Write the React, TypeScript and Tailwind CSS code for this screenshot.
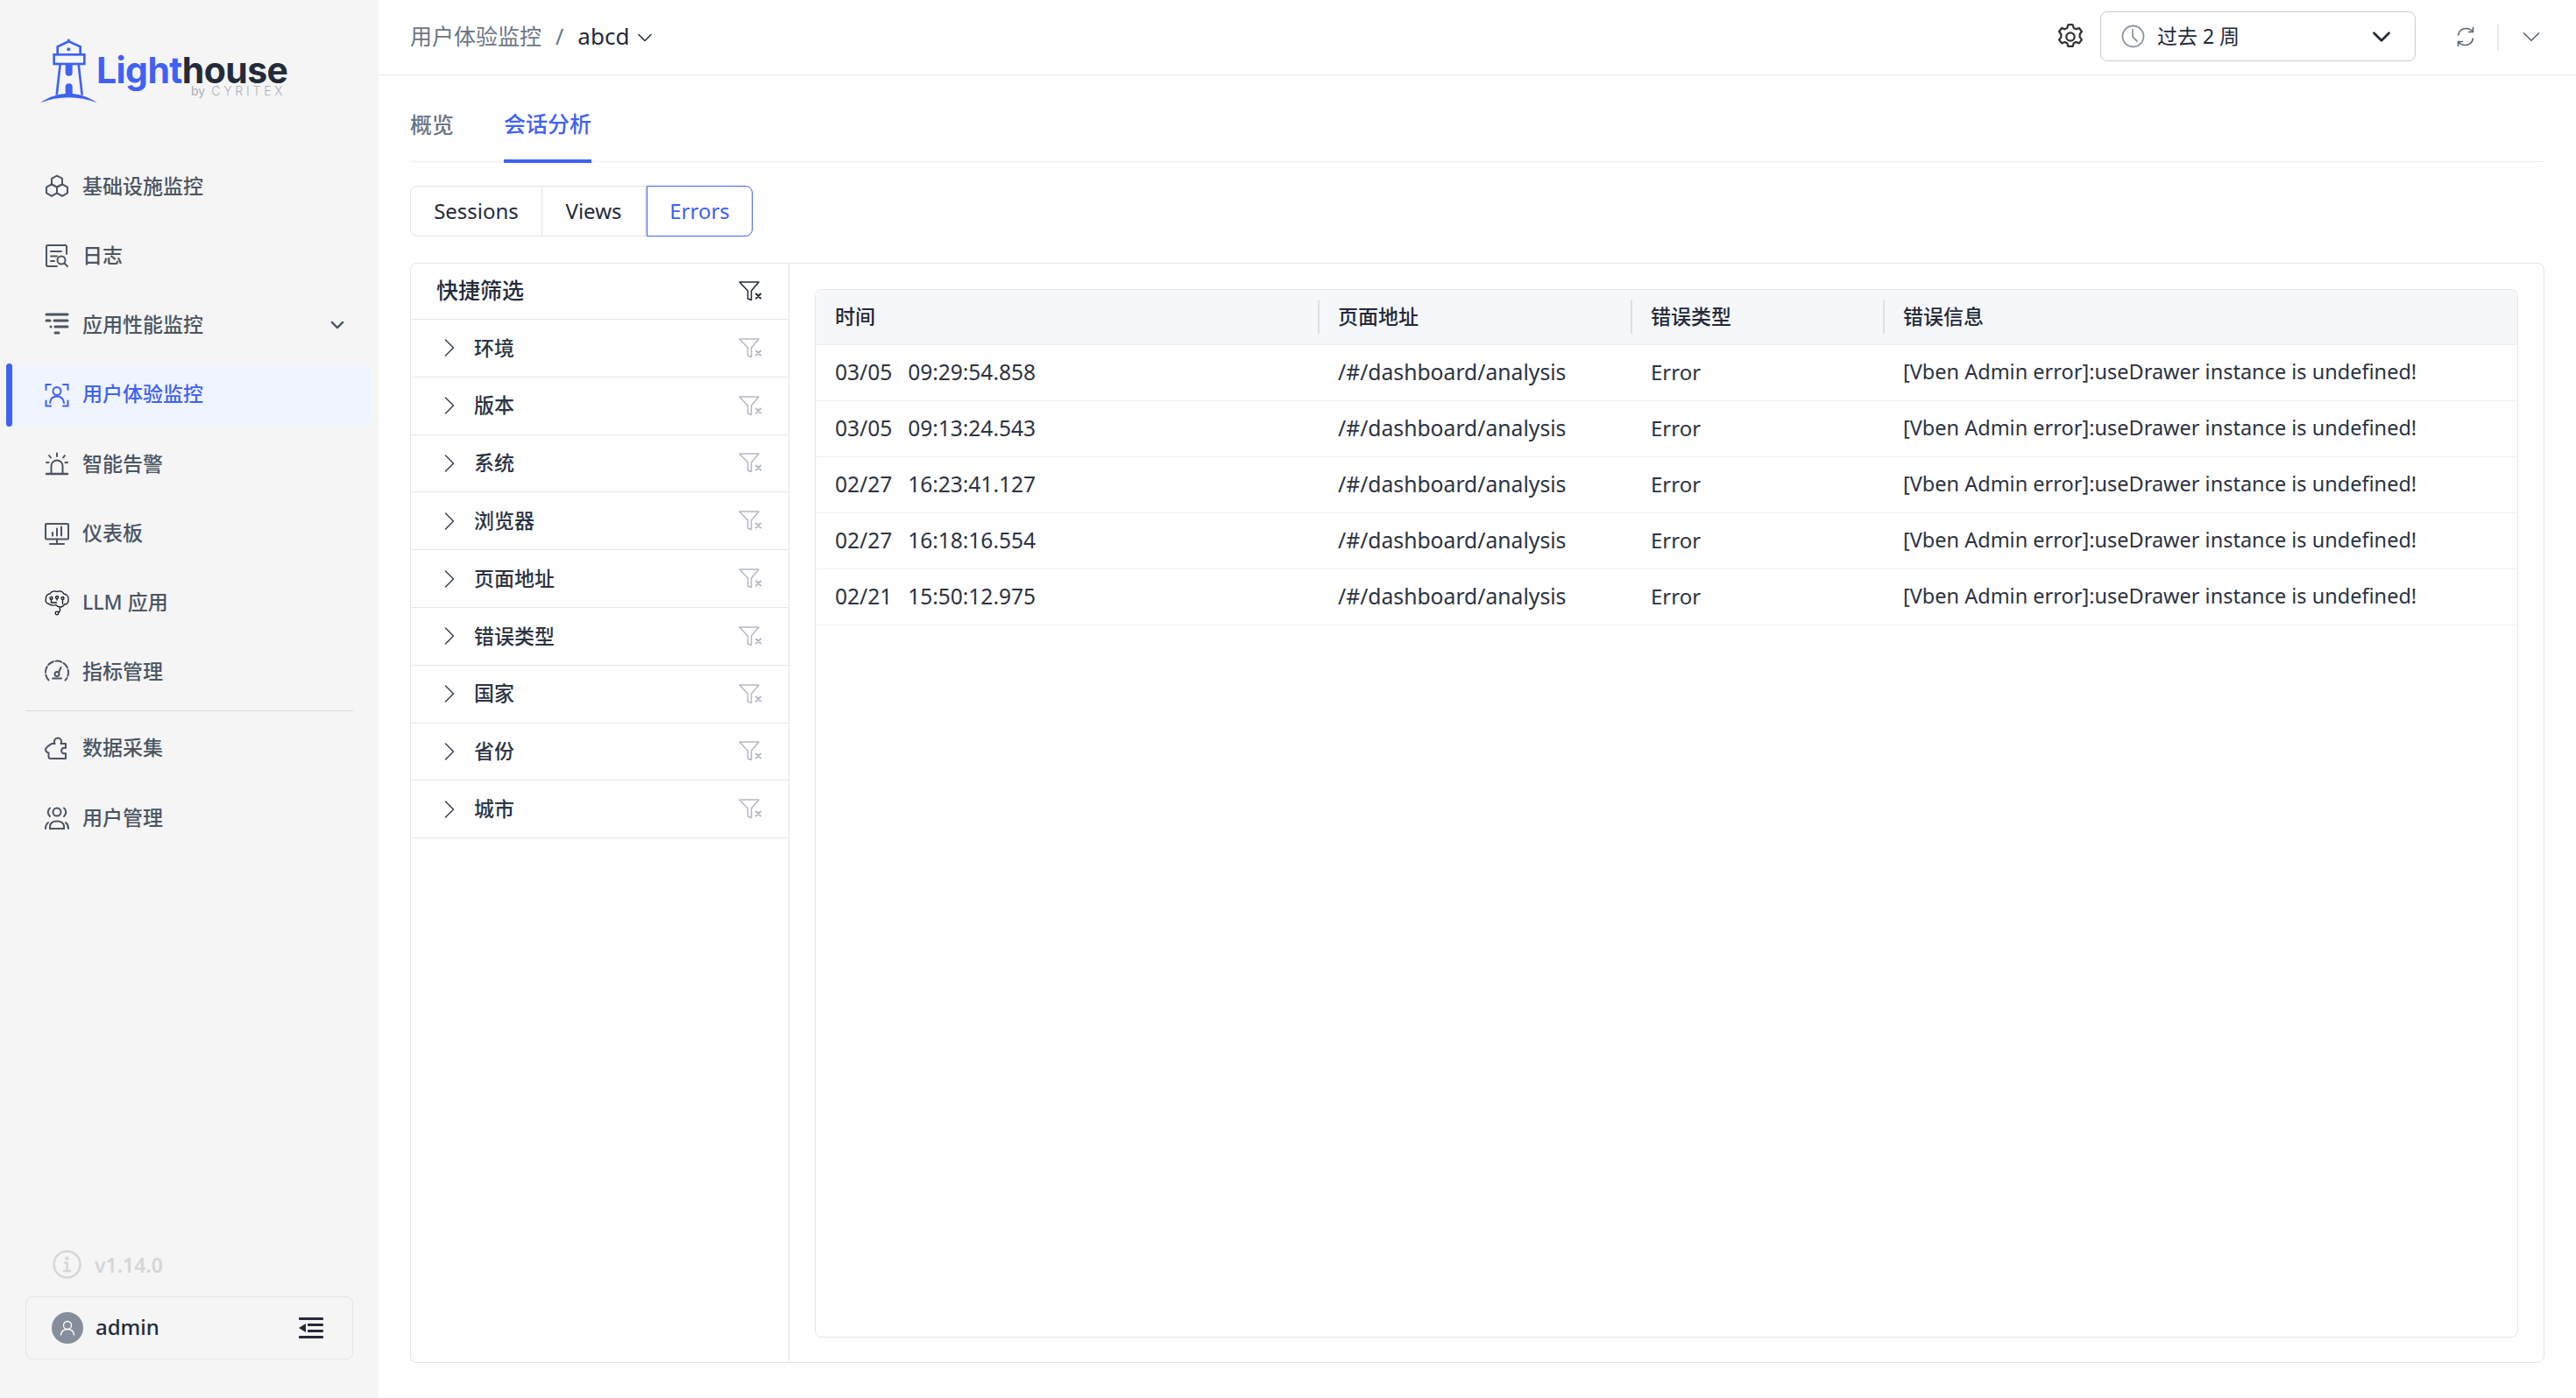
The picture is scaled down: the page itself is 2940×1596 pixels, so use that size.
import React from "react";

const FONT = "font-['Noto_Sans','Noto_Sans_CJK_SC',sans-serif]";
const BLUE = "#3f62f5";

type IconProps = { color?: string };

const HexIcon = ({ color = "#4b5563" }: IconProps) => (
  <svg width="28" height="28" viewBox="0 0 28 28" fill="none" stroke={color} strokeWidth="2" strokeLinejoin="round">
    <path d="M14 1.500l6 3.400v6.400l-6 3.400-6-3.400V4.900z" />
    <path d="M8 11.300l6 3.400v6.600l-6 3.500-6-3.500v-6.600z" />
    <path d="M20 11.300l6 3.400v6.600l-6 3.500-6-3.500v-6.600z" />
  </svg>
);

const LogIcon = ({ color = "#4b5563" }: IconProps) => (
  <svg width="28" height="28" viewBox="0 0 28 28" fill="none" stroke={color} strokeWidth="2" strokeLinecap="round">
    <path d="M25 12V3.500a1.500 1.500 0 0 0-1.500-1.500H3.500A1.500 1.500 0 0 0 2 3.500v21A1.500 1.500 0 0 0 3.500 26H14" />
    <path d="M7 9h12M7 14.500h7M7 20h4" />
    <circle cx="19" cy="19" r="4.500" />
    <path d="M22.500 22.500L26 26" />
  </svg>
);

const PerfIcon = ({ color = "#4b5563" }: IconProps) => (
  <svg width="28" height="28" viewBox="0 0 28 28" fill="none" stroke={color} strokeWidth="3" strokeLinecap="round">
    <path d="M2 2h24M2 9h4M11 9h15M7 16h0M12 16h14M14 16h0M12 23h4" />
  </svg>
);

const ScanUserIcon = ({ color = BLUE }: IconProps) => (
  <svg width="28" height="28" viewBox="0 0 28 28" fill="none" stroke={color} strokeWidth="2" strokeLinecap="round">
    <path d="M7 2H1.500v6M21 2h5.500v6M1.500 20.500V26.500H7M26.500 20.500V26.500H21" />
    <circle cx="14" cy="9.500" r="4.500" />
    <path d="M6 23c.6-5 3.500-7.500 8-7.500s7.400 2.500 8 7.500" />
  </svg>
);

const AlarmIcon = ({ color = "#4b5563" }: IconProps) => (
  <svg width="28" height="28" viewBox="0 0 28 28" fill="none" stroke={color} strokeWidth="2" strokeLinecap="round">
    <path d="M2 25h24" strokeWidth="2.500" />
    <path d="M7.500 24v-8a6.500 6.500 0 0 1 13 0v8" />
    <path d="M14 1.500v3.500M5 4l2 2.500M23 4l-2 2.500M2 12h2.500M23.500 12H26" />
  </svg>
);

const BoardIcon = ({ color = "#4b5563" }: IconProps) => (
  <svg width="28" height="28" viewBox="0 0 28 28" fill="none" stroke={color} strokeWidth="2" strokeLinecap="round">
    <rect x="1" y="3" width="26" height="17.500" rx="1" />
    <path d="M14 20.500V26M6 26h16M9 13v3.500M14 8.500v8M19 6.500v10" />
  </svg>
);

const BrainIcon = () => (
  <svg width="28" height="30" viewBox="0 0 28 30" fill="none" stroke="#111827" strokeWidth="1.300" strokeLinecap="round">
    <path d="M5 16.500C1.500 16 .5 13 1.500 10.500 1 7.500 3 5 6 5 7.500 2 11 1 14 2.500c3-1.500 6.500-.5 8 2.500 3 .5 5.500 3 5 6.500.5 3-1.500 5.500-4.500 5.500-1 2-2.500 3-4.500 3-2.500 0-4-1-5.500-2.500-1.500 1-5.500 1-7.500-1z" />
    <circle cx="7.500" cy="10" r="1.500" />
    <circle cx="14" cy="9" r="1.500" />
    <circle cx="20.500" cy="10" r="1.500" />
    <path d="M7.500 11.500V15h6M14 10.500v1.500M20.500 11.500v5M17 21c1 2 .5 4-1 5" />
    <circle cx="14" cy="27" r="1.800" />
  </svg>
);

const GaugeIcon = ({ color = "#4b5563" }: IconProps) => (
  <svg width="28" height="28" viewBox="0 0 28 28" fill="none" stroke={color} strokeWidth="2" strokeLinecap="round">
    <path d="M4.500 23.500A13 13 0 1 1 23.500 23.500" strokeDasharray="7 2.500" />
    <path d="M18.500 9l-2.500 5.500" />
    <circle cx="14" cy="16.500" r="2.500" />
    <path d="M9 21.500h10" />
  </svg>
);

const PuzzleIcon = ({ color = "#4b5563" }: IconProps) => (
  <svg width="28" height="28" viewBox="0 0 28 28" fill="none" stroke={color} strokeWidth="2" strokeLinejoin="round">
    <path d="M8 8h3.500c-1.500-3 0-6.500 3.500-6.500s5 3.500 3.500 6.500H24v5c-2.500-1-5 .5-5 3s2.500 4 5 3v6H6.500c-1.500 0-2-1-2-2v-4.500C2.500 18 1 16.500 1 14.500 1 12.500 5 10 8 8z" />
  </svg>
);

const UsersIcon = ({ color = "#4b5563" }: IconProps) => (
  <svg width="28" height="28" viewBox="0 0 28 28" fill="none" stroke={color} strokeWidth="2" strokeLinecap="round">
    <circle cx="14" cy="7" r="4.500" />
    <path d="M6 26v-2c0-4 3-6.500 8-6.500s8 2.500 8 6.500v2zM6 2.500C3 5 3 9.500 6 12M22 2.500c3 2.500 3 7 0 9.500M1 26c0-3 1-5.500 3-7M27 26c0-3-1-5.500-3-7" />
  </svg>
);

const FilterClearIcon = ({ color = "#b4b9c4" }: IconProps) => (
  <svg width="26" height="23" viewBox="0 0 26 23" fill="none" stroke={color} strokeWidth="1.500" strokeLinejoin="round" strokeLinecap="round">
    <path d="M1 1h22l-8.500 10v10.500l-4-1.500v-9z" />
    <path d="M20 14.500l5 5M25 14.500l-5 5" strokeWidth="2" />
  </svg>
);

const ChevronDown = ({ size = 18, color = "#4b5563", width = 2 }: { size?: number; color?: string; width?: number }) => (
  <svg width={size} height={size} viewBox="0 0 18 18" fill="none" stroke={color} strokeWidth={width} strokeLinecap="round" strokeLinejoin="round">
    <path d="M2 5.500l7 7 7-7" />
  </svg>
);

const ChevronRight = () => (
  <svg width="12" height="20" viewBox="0 0 12 20" fill="none" stroke="#374151" strokeWidth="1.500" strokeLinecap="round" strokeLinejoin="round">
    <path d="M1.500 1l9 9-9 9" />
  </svg>
);

const Logo = () => (
  <div className="flex h-[177px] items-start pl-[46px] pt-[44px]">
    <svg width="65" height="74" viewBox="138 130 195 222" className="shrink-0">
      <g fill="none" stroke={BLUE} strokeWidth="8">
        <path d="M197 184v-26l38-18 40 18v26" />
        <rect x="185" y="185" width="104" height="32" />
        <path d="M206 218l-12 106M269 218l12 106" />
        <path d="M235 132v9" />
      </g>
      <circle cx="235" cy="167" r="6" fill={BLUE} />
      <path d="M224 218h24v28a12 12 0 0 1-24 0z" fill={BLUE} />
      <path d="M224 324v-28a12 12 0 0 1 24 0v28z" fill={BLUE} />
      <path d="M138 350c60-42 134-42 194 0-60-24-134-24-194 0z" fill={BLUE} />
    </svg>
    <div className="ml-[-1px] font-['Inter',sans-serif]">
      <div className="mt-[19px] flex h-[34px] items-center text-[41px] font-bold leading-[34px] tracking-[-0.6px]">
        <span className="text-[#3f62f5]">Light</span>
        <span className="text-[#232b3a]">house</span>
      </div>
      <div className="flex h-[14px] justify-end gap-[7px] pr-[2px] text-[14px] leading-[14px] text-[#aab0bc]">
        <span>by</span>
        <span className="font-light tracking-[3.800px]">CYRITEX</span>
      </div>
    </div>
  </div>
);

const NavItem = ({
  icon,
  label,
  active,
  chevron,
}: {
  icon: React.ReactNode;
  label: string;
  active?: boolean;
  chevron?: boolean;
}) => (
  <div className="ml-[7px] flex h-[72px] w-[418px]">
    <span className={active ? "w-[7px] rounded-full bg-[#3f62f5]" : "w-[7px]"} />
    <div
      className={
        active
          ? "flex flex-1 items-center gap-[15px] rounded-lg bg-[#f0f4ff] pl-[37px] pr-[32px] text-[23px] font-medium text-[#3f62f5]"
          : "flex flex-1 items-center gap-[15px] rounded-lg pl-[37px] pr-[32px] text-[23px] font-medium text-[#4b5563]"
      }
    >
      {icon}
      <span className="mb-[2px]">{label}</span>
      {chevron && (
        <span className="ml-auto">
          <ChevronDown size={16} width={2.500} />
        </span>
      )}
    </div>
  </div>
);

const Sidebar = () => (
  <aside className="flex h-full w-[432px] shrink-0 flex-col bg-[#f5f5f5]">
    <Logo />
    <nav className="flex flex-col gap-[7.200px]">
      <NavItem icon={<HexIcon />} label="基础设施监控" />
      <NavItem icon={<LogIcon />} label="日志" />
      <NavItem icon={<PerfIcon />} label="应用性能监控" chevron />
      <NavItem icon={<ScanUserIcon />} label="用户体验监控" active />
      <NavItem icon={<AlarmIcon />} label="智能告警" />
      <NavItem icon={<BoardIcon />} label="仪表板" />
      <NavItem icon={<BrainIcon />} label="LLM 应用" />
      <NavItem icon={<GaugeIcon />} label="指标管理" />
      <div className="mx-[29px] h-[1px] bg-[#dcdcdc]" />
      <NavItem icon={<PuzzleIcon />} label="数据采集" />
      <NavItem icon={<UsersIcon />} label="用户管理" />
    </nav>
    <div className="mt-auto flex items-center gap-[15px] pl-[60px] text-[23px] font-semibold text-[#d4d6d9]">
      <svg width="33" height="33" viewBox="0 0 33 33" fill="none" stroke="#d4d6d9" strokeWidth="2.500" strokeLinecap="round">
        <circle cx="16.500" cy="16.500" r="15" />
        <path d="M14 14.500h2.500V24M13 24h7" />
        <circle cx="16.500" cy="9.500" r="1" />
      </svg>
      <span>v1.14.0</span>
    </div>
    <div className="mx-[29px] mb-[44px] mt-[19px] flex h-[72px] items-center rounded-lg border border-[#e3e5ea] pl-[29px] pr-[33px]">
      <span className="flex h-[36px] w-[36px] items-center justify-center rounded-full bg-[#868e9b]">
        <svg width="18" height="18" viewBox="0 0 18 18" fill="none" stroke="#fff" strokeWidth="1.300" strokeLinecap="round">
          <circle cx="9" cy="6" r="4.500" />
          <path d="M1.500 17c.5-4 3.500-6.500 7.500-6.500s7 2.500 7.500 6.500" />
        </svg>
      </span>
      <span className="mb-[2px] ml-[14px] text-[24px] font-medium text-[#232b3a]">admin</span>
      <svg className="ml-auto" width="28" height="24" viewBox="0 0 28 24" fill="#232b3a">
        <rect y="0" width="28" height="3" rx="1" />
        <rect x="10" y="7" width="18" height="3" rx="1" />
        <rect x="10" y="14" width="18" height="3" rx="1" />
        <rect y="21" width="28" height="3" rx="1" />
        <path d="M8 7v10L0 12z" />
      </svg>
    </div>
  </aside>
);

const Header = () => (
  <header className="flex h-[86px] shrink-0 items-center border-b border-[#e7e8ec] pl-[36px] pr-[40px] pb-[2px]">
    <span className="text-[25px] text-[#6b7585]">用户体验监控</span>
    <span className="mx-[16px] text-[25px] text-[#6b7585]">/</span>
    <span className="text-[26px] text-[#232b3a]">abcd</span>
    <span className="ml-[9px] mt-[3px]">
      <ChevronDown size={18} color="#232b3a" width={1.500} />
    </span>
    <svg className="ml-auto" width="32" height="32" viewBox="0 0 24 24" fill="none" stroke="#333" strokeWidth="1.700" strokeLinejoin="round">
      <path d="M12 1.500l2 .3.800 2.700 2 1 2.600-1 2.300 3-1.700 2.200v2.600l1.700 2.200-2.300 3-2.600-1-2 1-.8 2.700h-4l-.8-2.700-2-1-2.600 1-2.300-3 1.700-2.200v-2.600L2.300 7.500l2.300-3 2.600 1 2-1 .8-2.700z" />
      <circle cx="12" cy="12" r="3.500" />
    </svg>
    <div className="ml-[18px] flex h-[57px] w-[360px] items-center rounded-lg border border-[#c9cdd6] pl-[23px] pr-[27px]">
      <svg width="27" height="27" viewBox="0 0 27 27" fill="none" stroke="#8c95a3" strokeWidth="1.800" strokeLinecap="round">
        <circle cx="13.500" cy="13.500" r="12" />
        <path d="M13 6v8l5 5" />
      </svg>
      <span className="ml-[14px] text-[23px] text-[#232b3a]">过去 2 周</span>
      <span className="ml-auto">
        <ChevronDown size={22} color="#232b3a" width={2.200} />
      </span>
    </div>
    <svg className="ml-[46px]" width="22" height="24" viewBox="0 0 20 24" fill="none" stroke="#5b6473" strokeWidth="1.600" strokeLinecap="round" strokeLinejoin="round">
      <path d="M1.500 10C2.500 5.500 6 2.500 10.500 2.500c3 0 5.500 1 7.500 3.500M18.500 1.500V6.500H13.500" />
      <path d="M18.500 14c-1 4.500-4.500 7.500-9 7.500-3 0-5.500-1-7.500-3.500M1.500 22.500v-5h5" />
    </svg>
    <span className="ml-[25px] h-[30px] w-[2px] bg-[#e7e8ec]" />
    <span className="ml-[26px]">
      <ChevronDown size={22} color="#5b6473" width={1.300} />
    </span>
  </header>
);

const filters = ["环境", "版本", "系统", "浏览器", "页面地址", "错误类型", "国家", "省份", "城市"];

const FilterPanel = () => (
  <div className="w-[432px] shrink-0 border-r border-[#e3e5ea]">
    <div className="flex h-[64px] items-center justify-between border-b border-[#e7e8ec] pl-[29px] pr-[31px] text-[25px] font-medium text-[#232b3a]">
      <span className="mb-[2px]">快捷筛选</span>
      <FilterClearIcon color="#232b3a" />
    </div>
    {filters.map((name) => (
      <div key={name} className="flex h-[65.800px] items-center border-b border-[#e7e8ec] pl-[38px] pr-[31px] text-[23px] font-medium text-[#2b3342]">
        <ChevronRight />
        <span className="mb-[1px] ml-[22px]">{name}</span>
        <span className="ml-auto">
          <FilterClearIcon />
        </span>
      </div>
    ))}
  </div>
);

const rows = [
  ["03/05", "09:29:54.858"],
  ["03/05", "09:13:24.543"],
  ["02/27", "16:23:41.127"],
  ["02/27", "16:18:16.554"],
  ["02/21", "15:50:12.975"],
];

const COLS = "grid grid-cols-[573px_357px_288px_1fr]";

const ErrorTable = () => (
  <div className="mx-[29px] mb-[28px] mt-[29px] flex-1 overflow-hidden rounded-lg border border-[#e5e6eb]">
    <div className={`${COLS} h-[63px] border-b border-[#eff0f3] bg-[#f6f7f9] text-[23px] font-medium text-[#232b3a]`}>
      <div className="flex items-center pl-[22px]">
        <span className="mb-[2px]">时间</span>
      </div>
      {["页面地址", "错误类型", "错误信息"].map((h) => (
        <div key={h} className="flex items-center">
          <span className="h-[38px] w-[2px] bg-[#dcdfe4]" />
          <span className="mb-[2px] ml-[21px]">{h}</span>
        </div>
      ))}
    </div>
    {rows.map(([date, time]) => (
      <div key={time} className={`${COLS} h-[64px] items-center border-b border-[#eff0f3] text-[#2b3342]`}>
        <div className="mb-[1px] flex gap-[18px] pl-[22px] text-[24.500px]">
          <span>{date}</span>
          <span>{time}</span>
        </div>
        <div className="mb-[1px] pl-[23px] text-[24.700px]">/#/dashboard/analysis</div>
        <div className="mb-[1px] pl-[23px] text-[24px]">Error</div>
        <div className="mb-[1px] pl-[23px] text-[23.500px]">[Vben Admin error]:useDrawer instance is undefined!</div>
      </div>
    ))}
  </div>
);

export default function App() {
  return (
    <div className={`flex h-screen w-screen overflow-hidden bg-white ${FONT}`}>
      <Sidebar />
      <main className="flex min-w-0 flex-1 flex-col">
        <Header />
        <div className="flex flex-1 flex-col pb-[40px] pl-[36px] pr-[36px] pt-[12px]">
          <div className="flex h-[87px] shrink-0 gap-[57px] border-b border-[#eeeff2] text-[25px] font-medium">
            <span className="flex h-[87px] items-center pt-[3px] text-[#6b7585]">概览</span>
            <span className="flex h-[88px] items-center border-b-[4px] border-[#3f62f5] pt-[3px] text-[#3f62f5]">会话分析</span>
          </div>
          <div className="mt-[27px] flex h-[58px] w-[391px] shrink-0 text-[24px] text-[#232b3a]">
            <span className="flex w-[151px] items-center justify-center rounded-l-lg border border-[#e3e5ea] pb-[1px]">Sessions</span>
            <span className="flex w-[119px] items-center justify-center border-y border-r-2 border-[#e3e5ea] pb-[1px]">Views</span>
            <span className="flex w-[121px] items-center justify-center rounded-r-lg border border-[#3f62f5] pb-[1px] text-[#3f62f5]">Errors</span>
          </div>
          <div className="mt-[30px] flex min-h-0 flex-1 rounded-lg border border-[#e3e5ea]">
            <FilterPanel />
            <ErrorTable />
          </div>
        </div>
      </main>
    </div>
  );
}
